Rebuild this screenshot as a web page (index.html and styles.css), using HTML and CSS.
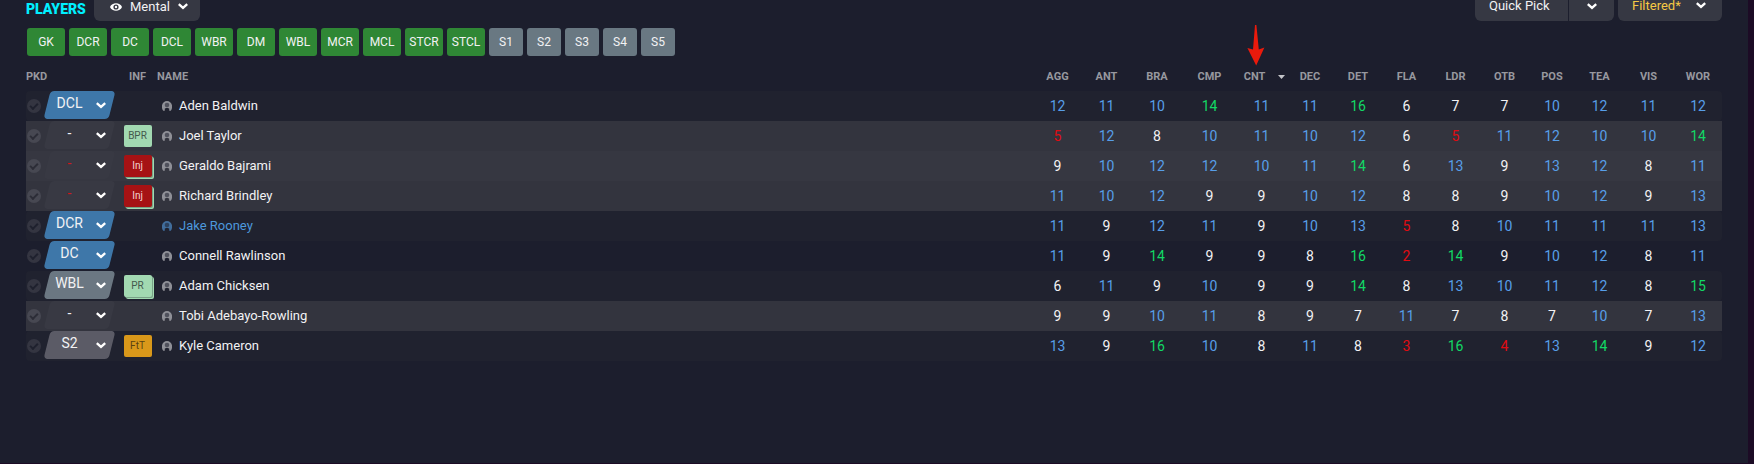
FILE: index.html
```html
<!DOCTYPE html>
<html lang="en">
<head>
    <meta charset="UTF-8">
    <meta name="viewport" content="width=device-width, initial-scale=1.0">
    <title>Players</title>
    <link rel="stylesheet" href="styles.css">
</head>
<body>
<svg class="sprite" aria-hidden="true">
    <symbol id="chevron" viewBox="0 0 10 7">
        <path d="M0.8 1.2 L5 4.8 L9.2 1.2" fill="none" stroke="#fff" stroke-width="2.4"/>
    </symbol>
    <symbol id="person" viewBox="0 0 10 10">
        <path d="M1.2 9.8 C-2 5 1 0 5 0 C9 0 12 5 8.8 9.8 L7.2 9.8 V7.6 L5 6.8 L2.8 7.6 V9.8 Z" fill="currentColor"/>
        <circle cx="5" cy="4" r="2.3" fill="#1c1e2c" opacity="0.55"/>
    </symbol>
</svg>
<main class="panel">
    <header class="toolbar">
        <h1>PLAYERS</h1>
        <button class="btn view" type="button">
            <svg class="eye" viewBox="0 0 12 8"><path d="M0 4 C2 -1 10 -1 12 4 C10 9 2 9 0 4 Z" fill="#fff"/><circle cx="6" cy="4" r="2.6" fill="#363843"/><circle cx="6" cy="4" r="1.2" fill="#fff"/></svg>
            Mental
            <svg class="chevron"><use href="#chevron"/></svg>
        </button>
        <div class="actions">
            <div class="split">
                <button class="btn quick" type="button">Quick Pick</button>
                <button class="btn more" type="button" aria-label="Quick pick options"><svg class="chevron"><use href="#chevron"/></svg></button>
            </div>
            <button class="btn filter" type="button">Filtered* <svg class="chevron"><use href="#chevron"/></svg></button>
        </div>
    </header>

    <div class="positions">
        <button class="pos" type="button">GK</button>
        <button class="pos" type="button">DCR</button>
        <button class="pos" type="button">DC</button>
        <button class="pos" type="button">DCL</button>
        <button class="pos" type="button">WBR</button>
        <button class="pos" type="button">DM</button>
        <button class="pos" type="button">WBL</button>
        <button class="pos" type="button">MCR</button>
        <button class="pos" type="button">MCL</button>
        <button class="pos" type="button">STCR</button>
        <button class="pos" type="button">STCL</button>
        <button class="pos sub" type="button">S1</button>
        <button class="pos sub" type="button">S2</button>
        <button class="pos sub" type="button">S3</button>
        <button class="pos sub" type="button">S4</button>
        <button class="pos sub" type="button">S5</button>
    </div>

    <table>
        <colgroup>
            <col class="c-pkd"><col class="c-inf"><col>
            <col class="c-49"><col class="c-49"><col class="c-52"><col class="c-53"><col class="c-51"><col class="c-46"><col class="c-50">
            <col class="c-47"><col class="c-51"><col class="c-47"><col class="c-48"><col class="c-47"><col class="c-51"><col class="c-48">
        </colgroup>
        <thead>
        <tr>
            <th class="left">PKD</th>
            <th>INF</th>
            <th class="left name">NAME</th>
            <th>AGG</th><th>ANT</th><th>BRA</th><th>CMP</th>
            <th class="sorted">CNT<svg class="sort" viewBox="0 0 7 4"><path d="M0 0 H7 L3.5 4 Z" fill="#c4c5c9"/></svg><svg class="pointer" viewBox="0 0 18 41"><path d="M8 0 H9.4 L11.8 24.5 L17.4 22.4 L9.2 40.5 L0.4 22.9 L6 24.5 Z" fill="#ea1a0c"/></svg></th>
            <th>DEC</th><th>DET</th><th>FLA</th><th>LDR</th><th>OTB</th><th>POS</th><th>TEA</th><th>VIS</th><th>WOR</th>
        </tr>
        </thead>
        <tbody>
        <tr class="odd">
            <td><div class="pick"><input type="checkbox" checked aria-label="Pick Aden Baldwin"><span class="slot blue"><select aria-label="Position of Aden Baldwin"><option>DCL</option></select><svg class="chevron"><use href="#chevron"/></svg></span></div></td>
            <td></td>
            <td class="name"><div class="player"><svg class="person"><use href="#person"/></svg>Aden Baldwin</div></td>
            <td class="mid">12</td><td class="mid">11</td><td class="mid">10</td><td class="high">14</td><td class="mid">11</td><td class="mid">11</td><td class="high">16</td>
            <td>6</td><td>7</td><td>7</td><td class="mid">10</td><td class="mid">12</td><td class="mid">11</td><td class="mid">12</td>
        </tr>
        <tr class="out">
            <td><div class="pick"><input type="checkbox" checked aria-label="Pick Joel Taylor"><span class="slot"><select aria-label="Position of Joel Taylor"><option>-</option></select><svg class="chevron"><use href="#chevron"/></svg></span></div></td>
            <td><span class="badge green">BPR</span></td>
            <td class="name"><div class="player"><svg class="person"><use href="#person"/></svg>Joel Taylor</div></td>
            <td class="low">5</td><td class="mid">12</td><td>8</td><td class="mid">10</td><td class="mid">11</td><td class="mid">10</td><td class="mid">12</td>
            <td>6</td><td class="low">5</td><td class="mid">11</td><td class="mid">12</td><td class="mid">10</td><td class="mid">10</td><td class="high">14</td>
        </tr>
        <tr class="out odd">
            <td><div class="pick"><input type="checkbox" checked aria-label="Pick Geraldo Bajrami"><span class="slot injured"><select aria-label="Position of Geraldo Bajrami"><option>-</option></select><svg class="chevron"><use href="#chevron"/></svg></span></div></td>
            <td><span class="badge red stacked">Inj</span></td>
            <td class="name"><div class="player"><svg class="person"><use href="#person"/></svg>Geraldo Bajrami</div></td>
            <td>9</td><td class="mid">10</td><td class="mid">12</td><td class="mid">12</td><td class="mid">10</td><td class="mid">11</td><td class="high">14</td>
            <td>6</td><td class="mid">13</td><td>9</td><td class="mid">13</td><td class="mid">12</td><td>8</td><td class="mid">11</td>
        </tr>
        <tr class="out">
            <td><div class="pick"><input type="checkbox" checked aria-label="Pick Richard Brindley"><span class="slot injured"><select aria-label="Position of Richard Brindley"><option>-</option></select><svg class="chevron"><use href="#chevron"/></svg></span></div></td>
            <td><span class="badge red stacked">Inj</span></td>
            <td class="name"><div class="player"><svg class="person"><use href="#person"/></svg>Richard Brindley</div></td>
            <td class="mid">11</td><td class="mid">10</td><td class="mid">12</td><td>9</td><td>9</td><td class="mid">10</td><td class="mid">12</td>
            <td>8</td><td>8</td><td>9</td><td class="mid">10</td><td class="mid">12</td><td>9</td><td class="mid">13</td>
        </tr>
        <tr class="odd">
            <td><div class="pick"><input type="checkbox" checked aria-label="Pick Jake Rooney"><span class="slot blue"><select aria-label="Position of Jake Rooney"><option>DCR</option></select><svg class="chevron"><use href="#chevron"/></svg></span></div></td>
            <td></td>
            <td class="name"><div class="player loan"><svg class="person"><use href="#person"/></svg>Jake Rooney</div></td>
            <td class="mid">11</td><td>9</td><td class="mid">12</td><td class="mid">11</td><td>9</td><td class="mid">10</td><td class="mid">13</td>
            <td class="low">5</td><td>8</td><td class="mid">10</td><td class="mid">11</td><td class="mid">11</td><td class="mid">11</td><td class="mid">13</td>
        </tr>
        <tr>
            <td><div class="pick"><input type="checkbox" checked aria-label="Pick Connell Rawlinson"><span class="slot blue"><select aria-label="Position of Connell Rawlinson"><option>DC</option></select><svg class="chevron"><use href="#chevron"/></svg></span></div></td>
            <td></td>
            <td class="name"><div class="player"><svg class="person"><use href="#person"/></svg>Connell Rawlinson</div></td>
            <td class="mid">11</td><td>9</td><td class="high">14</td><td>9</td><td>9</td><td>8</td><td class="high">16</td>
            <td class="low">2</td><td class="high">14</td><td>9</td><td class="mid">10</td><td class="mid">12</td><td>8</td><td class="mid">11</td>
        </tr>
        <tr class="odd">
            <td><div class="pick"><input type="checkbox" checked aria-label="Pick Adam Chicksen"><span class="slot steel"><select aria-label="Position of Adam Chicksen"><option>WBL</option></select><svg class="chevron"><use href="#chevron"/></svg></span></div></td>
            <td><span class="badge green stacked">PR</span></td>
            <td class="name"><div class="player"><svg class="person"><use href="#person"/></svg>Adam Chicksen</div></td>
            <td>6</td><td class="mid">11</td><td>9</td><td class="mid">10</td><td>9</td><td>9</td><td class="high">14</td>
            <td>8</td><td class="mid">13</td><td class="mid">10</td><td class="mid">11</td><td class="mid">12</td><td>8</td><td class="high">15</td>
        </tr>
        <tr class="out">
            <td><div class="pick"><input type="checkbox" checked aria-label="Pick Tobi Adebayo-Rowling"><span class="slot"><select aria-label="Position of Tobi Adebayo-Rowling"><option>-</option></select><svg class="chevron"><use href="#chevron"/></svg></span></div></td>
            <td></td>
            <td class="name"><div class="player"><svg class="person"><use href="#person"/></svg>Tobi Adebayo-Rowling</div></td>
            <td>9</td><td>9</td><td class="mid">10</td><td class="mid">11</td><td>8</td><td>9</td><td>7</td>
            <td class="mid">11</td><td>7</td><td>8</td><td>7</td><td class="mid">10</td><td>7</td><td class="mid">13</td>
        </tr>
        <tr class="odd">
            <td><div class="pick"><input type="checkbox" checked aria-label="Pick Kyle Cameron"><span class="slot grey"><select aria-label="Position of Kyle Cameron"><option>S2</option></select><svg class="chevron"><use href="#chevron"/></svg></span></div></td>
            <td><span class="badge amber">FtT</span></td>
            <td class="name"><div class="player"><svg class="person"><use href="#person"/></svg>Kyle Cameron</div></td>
            <td class="mid">13</td><td>9</td><td class="high">16</td><td class="mid">10</td><td>8</td><td class="mid">11</td><td>8</td>
            <td class="low">3</td><td class="high">16</td><td class="low">4</td><td class="mid">13</td><td class="high">14</td><td>9</td><td class="mid">12</td>
        </tr>
        </tbody>
    </table>
</main>
</body>
</html>
```

FILE: styles.css
```css
* {
    box-sizing: border-box;
}

body {
    margin: 0;
    min-height: 100vh;
    display: flex;
    padding: 0 6px 1px 0;
    background-color: #1c0b25;
    color: #f2f2f4;
    font-family: Roboto, "Liberation Sans", sans-serif;
    font-size: 14px;
}

button, select {
    font: inherit;
    color: inherit;
    border: 0;
    padding: 0;
}

.sprite {
    position: absolute;
    width: 0;
    height: 0;
}

.panel {
    flex: 1;
    min-width: 0;
    padding: 0 26px;
    background-color: #1c1e2d;
}

/* top bar */
.toolbar {
    display: flex;
    align-items: flex-start;
    height: 28px;
}

h1 {
    margin: 0;
    width: 68px;
    font-size: 14px;
    line-height: 18px;
    font-weight: 900;
    color: #00eeff;
}

.btn {
    display: flex;
    align-items: center;
    height: 21px;
    padding-bottom: 8px;
    background-color: #363843;
    border-radius: 0 0 6px 6px;
}

.view {
    padding-left: 16px;
    width: 106px;
    font-size: 13px;
    gap: 8px;
}

.eye {
    width: 12px;
    height: 8px;
}

.chevron {
    width: 10px;
    height: 7px;
}

.actions {
    display: flex;
    gap: 4px;
    margin-left: auto;
}

.split {
    display: flex;
    gap: 1px;
}

.quick {
    width: 93px;
    padding-left: 14px;
    padding-bottom: 11px;
    font-size: 13px;
    border-radius: 0 0 0 6px;
}

.more {
    width: 45px;
    justify-content: center;
    border-radius: 0 0 6px 0;
}

.filter {
    width: 104px;
    padding: 0 16px 10px 14px;
    justify-content: space-between;
    font-size: 13px;
    color: #f5c945;
}

/* position filters */
.positions {
    display: flex;
    gap: 4px;
    padding-left: 1px;
}

.pos {
    width: 38px;
    height: 28px;
    border-radius: 3px;
    background-color: #2f8735;
    font-size: 12px;
    text-align: center;
}

.pos.sub {
    width: 34px;
    background-color: #697882;
}

/* squad table */
table {
    width: 100%;
    table-layout: fixed;
    border-collapse: separate;
    border-spacing: 0;
    margin-top: 6px;
}

.c-pkd { width: 95px; }
.c-inf { width: 33px; }
.c-46 { width: 46px; }
.c-47 { width: 47px; }
.c-48 { width: 48px; }
.c-49 { width: 49px; }
.c-50 { width: 50px; }
.c-51 { width: 51px; }
.c-52 { width: 52px; }
.c-53 { width: 53px; }

th {
    height: 29px;
    padding: 0;
    font-size: 11px;
    font-weight: bold;
    color: #97989f;
    text-align: center;
}

td {
    height: 30px;
    padding: 0 0 1px;
    text-align: center;
}

th.left, td.name {
    text-align: left;
}

th.name {
    padding-left: 3px;
}

.sorted {
    position: relative;
    padding-right: 14px;
}

.sort {
    position: absolute;
    left: 42px;
    top: 13px;
    width: 7px;
    height: 4px;
}

.pointer {
    position: absolute;
    left: 11px;
    top: -37px;
    width: 18px;
    height: 41px;
}

.odd td {
    background-color: #20222f;
}

.out td {
    background-color: #33343e;
}

.out.odd td {
    background-color: #363741;
}

.odd td:first-child {
    border-radius: 4px 0 0 4px;
}

.odd td:last-child {
    border-radius: 0 4px 4px 0;
}

.out td:first-child, .out td:last-child {
    border-radius: 0;
}

.mid { color: #579ee8; }
.high { color: #12d865; }
.low { color: #e00b12; }

.pick {
    display: flex;
    align-items: flex-start;
    gap: 3px;
    height: 29px;
    padding-left: 1px;
}

.pick input {
    appearance: none;
    display: flex;
    justify-content: center;
    margin: 8px 0 0;
    width: 14px;
    height: 14px;
    border-radius: 50%;
    background-color: #343541;
}

.pick input::after {
    content: "";
    box-sizing: border-box;
    width: 8px;
    height: 5px;
    margin-top: 4px;
    border-left: 2px solid #1f212e;
    border-bottom: 2px solid #1f212e;
    transform: rotate(-45deg);
}

.out .pick input {
    background-color: #474852;
}

.out .pick input::after {
    border-color: #2c2d37;
}

.slot {
    position: relative;
    display: flex;
    width: 71px;
    height: 28px;
}

.slot::before {
    content: "";
    position: absolute;
    inset: 0 3px;
    border-radius: 4px;
    background-color: #383943;
    transform: skewX(-14deg);
}

.slot.blue::before { background-color: #3e77a9; }
.slot.steel::before { background-color: #6b7782; }
.slot.grey::before { background-color: #5b5b66; }

.slot select {
    position: relative;
    appearance: none;
    width: 100%;
    padding: 0 20px 4px 0;
    background: none;
    text-align-last: center;
}

.slot.injured select {
    color: #d4161a;
}

.slot .chevron {
    position: absolute;
    right: 9px;
    top: 11px;
    pointer-events: none;
}

.badge {
    display: inline-block;
    width: 28px;
    height: 22px;
    line-height: 22px;
    border-radius: 2px;
    font-size: 10px;
    vertical-align: middle;
}

.badge.green { background-color: #a2d9b1; color: #44584c; }
.badge.red { background-color: #a61214; color: #f0d5d5; }
.badge.amber { background-color: #d9981a; color: #5a4213; }

.badge.stacked {
    box-shadow: 1px 1px 0 #79a387, 2px 2px 0 #a2d9b1;
}

.player {
    display: flex;
    align-items: center;
    gap: 7px;
    padding-left: 8px;
    font-size: 13px;
}

.person {
    width: 10px;
    height: 10px;
    color: #8f9097;
}

.loan { color: #4d98dc; }
.loan .person { color: #416d9c; }
```
